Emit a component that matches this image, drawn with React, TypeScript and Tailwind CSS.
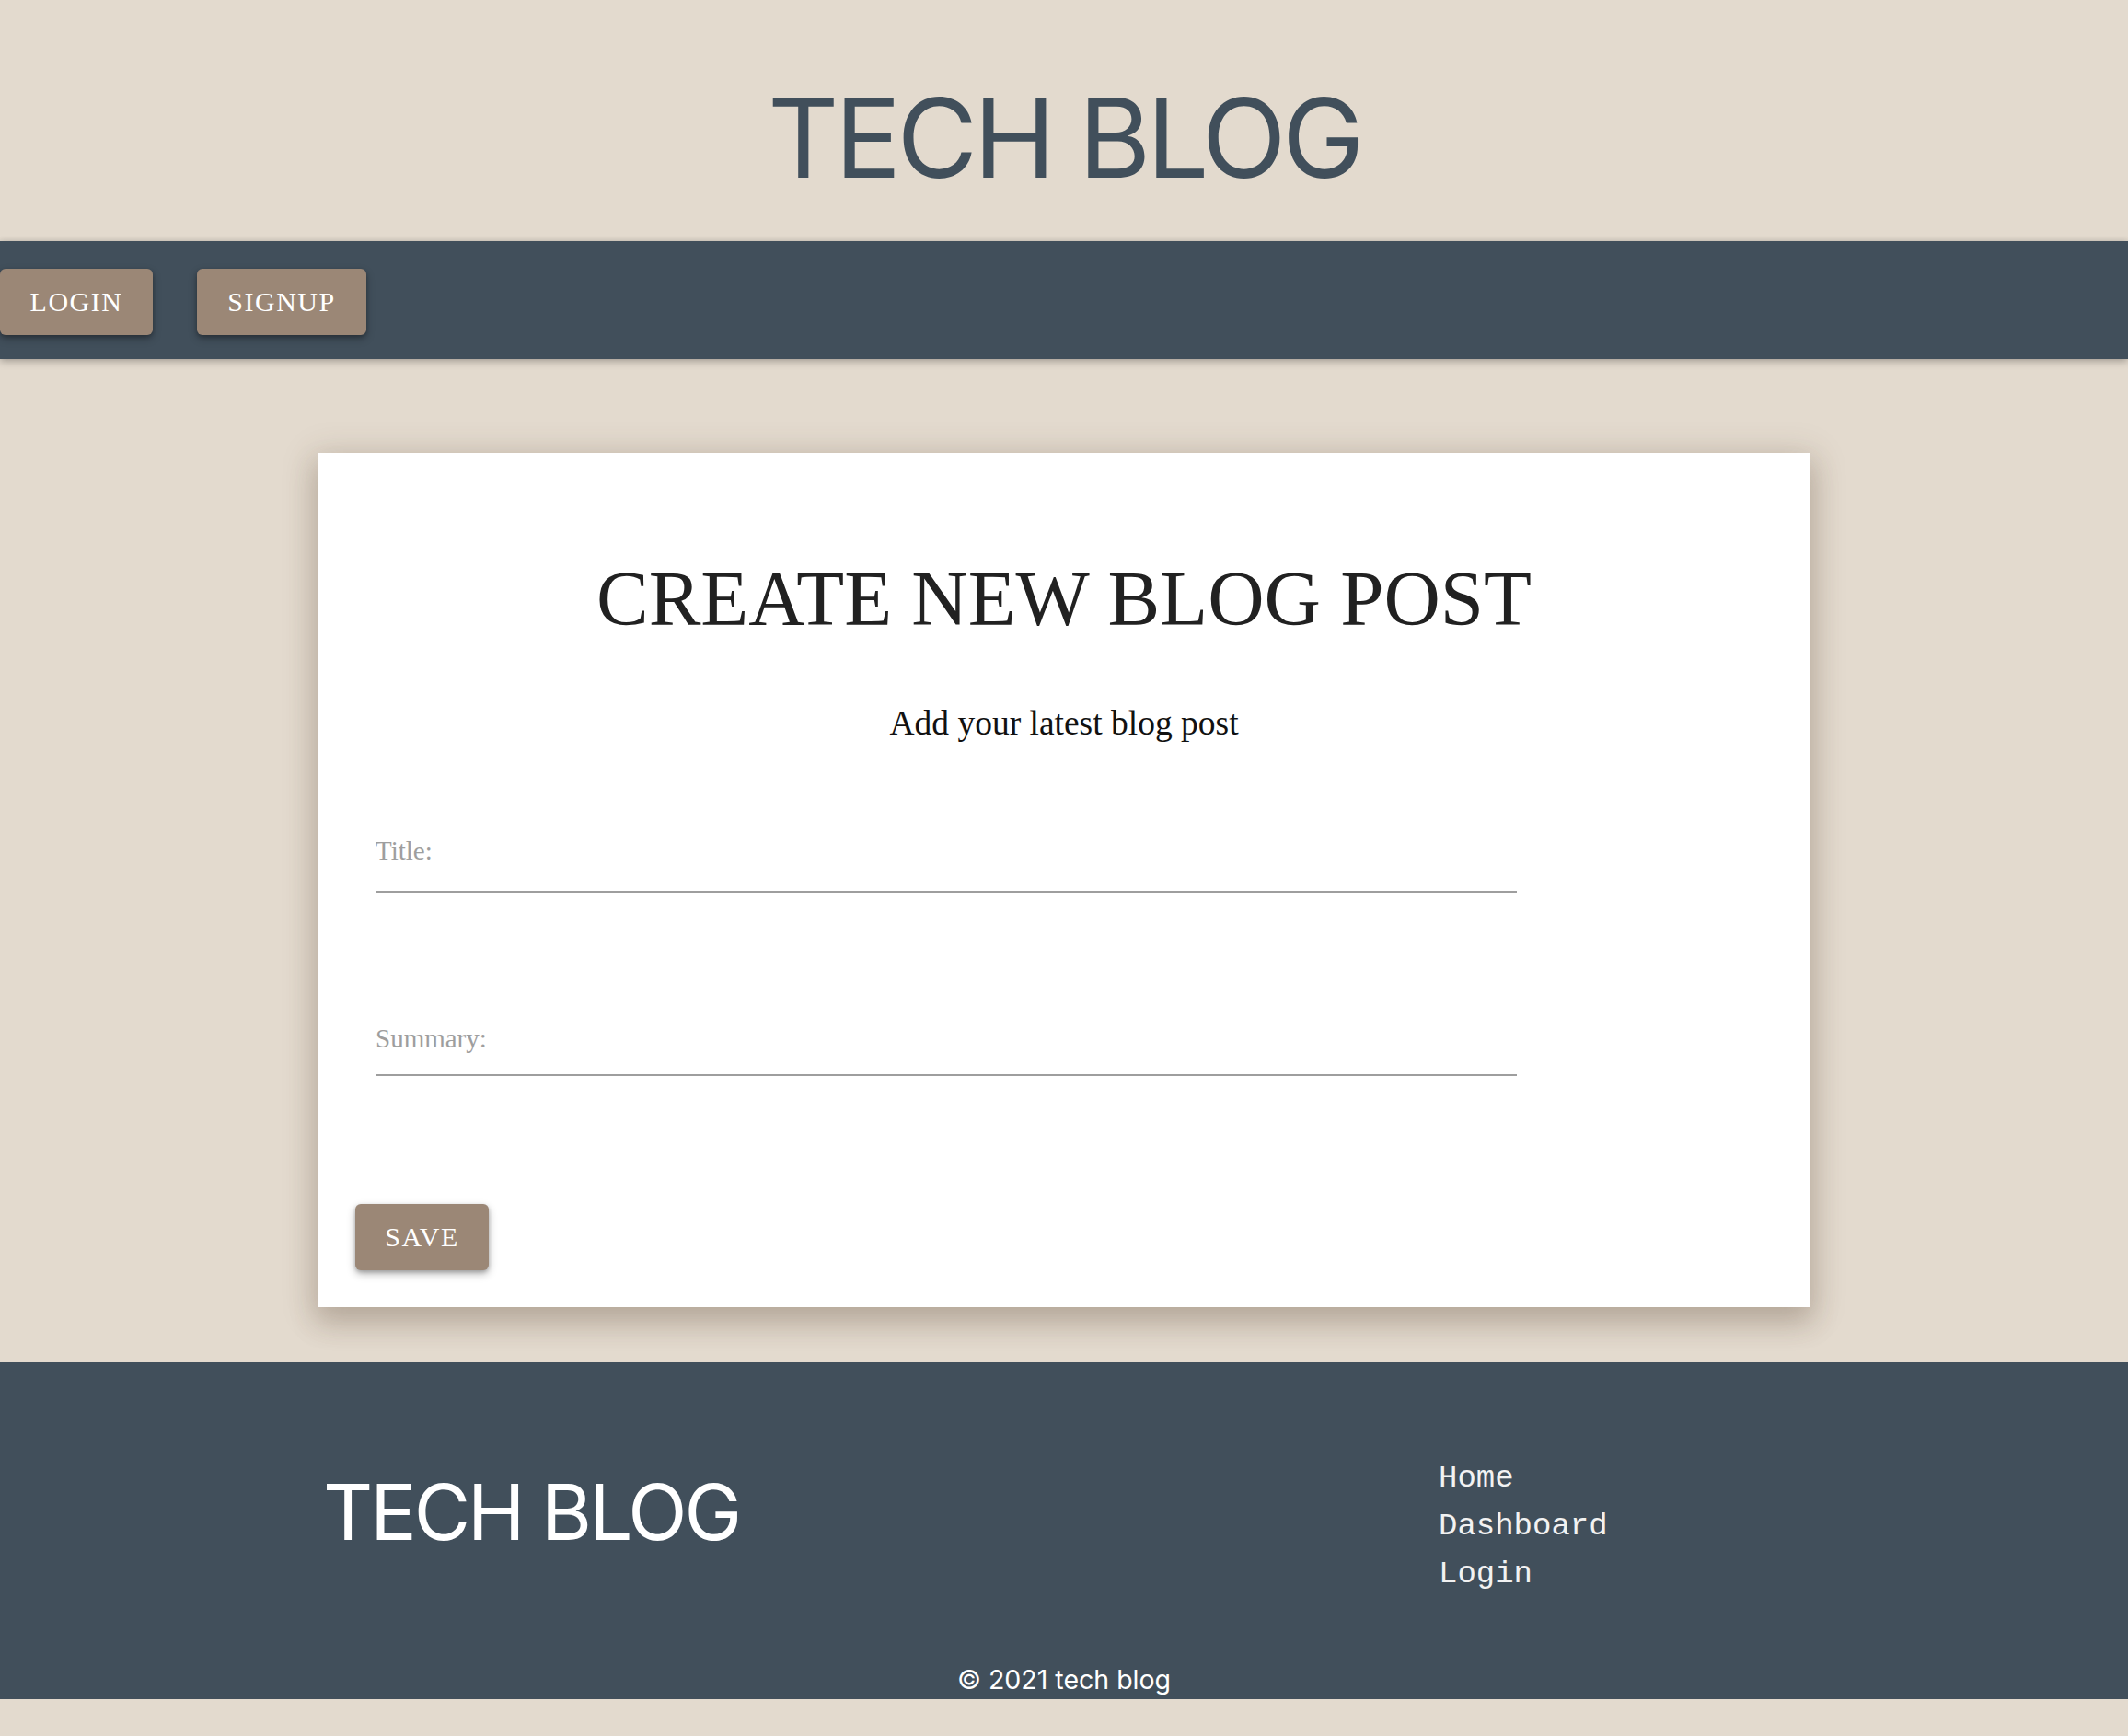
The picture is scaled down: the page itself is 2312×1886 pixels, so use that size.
import type { JSX } from "react";

const serif = "font-['Liberation_Serif','Times_New_Roman',serif]";
const btn =
  "h-[72px] rounded-[6px] bg-[#9b8776] text-white text-[30px] leading-none uppercase tracking-[1.5px] shadow-[0_4px_10px_rgba(0,0,0,0.28),0_2px_4px_rgba(0,0,0,0.2)] " +
  serif;

export default function App(): JSX.Element {
  return (
    <div className="min-h-[1886px] bg-[#e3dace] font-['Inter',sans-serif]">
      <header className="h-[262px] pt-[90px] text-center">
        <h1 className="text-[120px] leading-none tracking-[-4.5px] text-[#414f5b]">
          TECH BLOG
        </h1>
      </header>

      <nav className="h-[128px] pt-[30px] flex items-start gap-[48px] bg-[#414f5b] shadow-[0_3px_8px_rgba(0,0,0,0.25),0_-1px_6px_rgba(0,0,0,0.08)]">
        <button className={btn + " w-[166px]"}>Login</button>
        <button className={btn + " w-[184px]"}>Signup</button>
      </nav>

      <main className="pt-[102px] pb-[60px]">
        <section
          className={
            "mx-auto w-[1620px] bg-white pt-[116px] pb-[40px] shadow-[0_16px_28px_2px_rgba(90,70,50,0.22),0_6px_34px_6px_rgba(90,70,50,0.16)] " +
            serif
          }
        >
          <h2 className="text-center text-[85px] leading-none text-[#212121]">
            CREATE NEW BLOG POST
          </h2>
          <p className="mt-[74px] text-center text-[37.5px] leading-none text-[#111]">
            Add your latest blog post
          </p>

          <form className="px-[62px]">
            <div className="mt-[105px] w-[1240px]">
              <label className="block text-[29px] leading-none text-[#9e9e9e]">
                Title:
              </label>
              <div className="mt-[29px] h-[2px] bg-[#9e9e9e]" />
            </div>
            <div className="mt-[144px] w-[1240px]">
              <label className="block text-[29px] leading-none text-[#9e9e9e]">
                Summary:
              </label>
              <div className="mt-[24px] h-[2px] bg-[#9e9e9e]" />
            </div>
          </form>

          <div className="mt-[139px] pl-[40px]">
            <button type="button" className={btn + " w-[145px]"}>
              Save
            </button>
          </div>
        </section>
      </main>

      <footer className="h-[366px] bg-[#414f5b] pt-[100px] text-white">
        <div className="mx-auto w-[1620px] flex items-start">
          <div className="w-[1217px] pl-[5px] pt-[21px]">
            <h3 className="text-[84px] leading-none tracking-[-3px]">TECH BLOG</h3>
          </div>
          <ul className="font-['Liberation_Mono','Courier_New',monospace] text-[34px] leading-[52px] text-[#f2f2f2]">
            <li>Home</li>
            <li>Dashboard</li>
            <li>Login</li>
          </ul>
        </div>
        <p className="mt-[72px] text-center text-[28.5px] leading-[34px]">
          © 2021 tech blog
        </p>
      </footer>
    </div>
  );
}
